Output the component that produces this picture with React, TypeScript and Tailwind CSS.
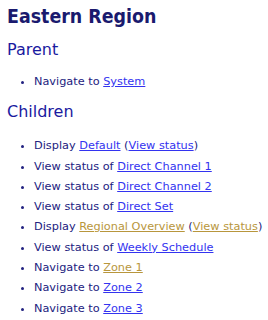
import React from "react";

type Part = { text: string; href?: boolean; visited?: boolean };

const parentItems: Part[][] = [
  [{ text: "Navigate to " }, { text: "System", href: true }],
];

const childItems: Part[][] = [
  [
    { text: "Display " },
    { text: "Default", href: true },
    { text: " (" },
    { text: "View status", href: true },
    { text: ")" },
  ],
  [{ text: "View status of " }, { text: "Direct Channel 1", href: true }],
  [{ text: "View status of " }, { text: "Direct Channel 2", href: true }],
  [{ text: "View status of " }, { text: "Direct Set", href: true }],
  [
    { text: "Display " },
    { text: "Regional Overview", href: true, visited: true },
    { text: " (" },
    { text: "View status", href: true, visited: true },
    { text: ")" },
  ],
  [{ text: "View status of " }, { text: "Weekly Schedule", href: true }],
  [{ text: "Navigate to " }, { text: "Zone 1", href: true, visited: true }],
  [{ text: "Navigate to " }, { text: "Zone 2", href: true }],
  [{ text: "Navigate to " }, { text: "Zone 3", href: true }],
];

const ItemList = ({ items }: { items: Part[][] }) => (
  <ul className="list-disc pl-[27px] text-[11.3px] leading-[20.3px] text-[#222280] whitespace-nowrap">
    {items.map((parts, i) => (
      <li key={i}>
        {parts.map((p, j) =>
          p.href ? (
            <a
              key={j}
              href="#"
              className={
                p.visited ? "underline text-[#b8963c]" : "underline text-[#3333f0]"
              }
            >
              {p.text}
            </a>
          ) : (
            <span key={j}>{p.text}</span>
          )
        )}
      </li>
    ))}
  </ul>
);

export default function App() {
  return (
    <div className="bg-white w-[268px] h-[320px] overflow-hidden px-[7px] pt-[4px] font-['DejaVu_Sans',Verdana,sans-serif]">
      <h1 className="text-[19.4px] font-bold leading-[26px] text-[#1a1a6e] font-['DejaVu_Sans_Condensed','DejaVu_Sans',sans-serif]">
        Eastern Region
      </h1>
      <h2 className="mt-[9px] text-[16px] leading-[22px] text-[#1a1aa0]">Parent</h2>
      <div className="mt-[11px]">
        <ItemList items={parentItems} />
      </div>
      <h2 className="mt-[9px] text-[16px] leading-[22px] text-[#1a1aa0]">Children</h2>
      <div className="mt-[13px]">
        <ItemList items={childItems} />
      </div>
    </div>
  );
}
